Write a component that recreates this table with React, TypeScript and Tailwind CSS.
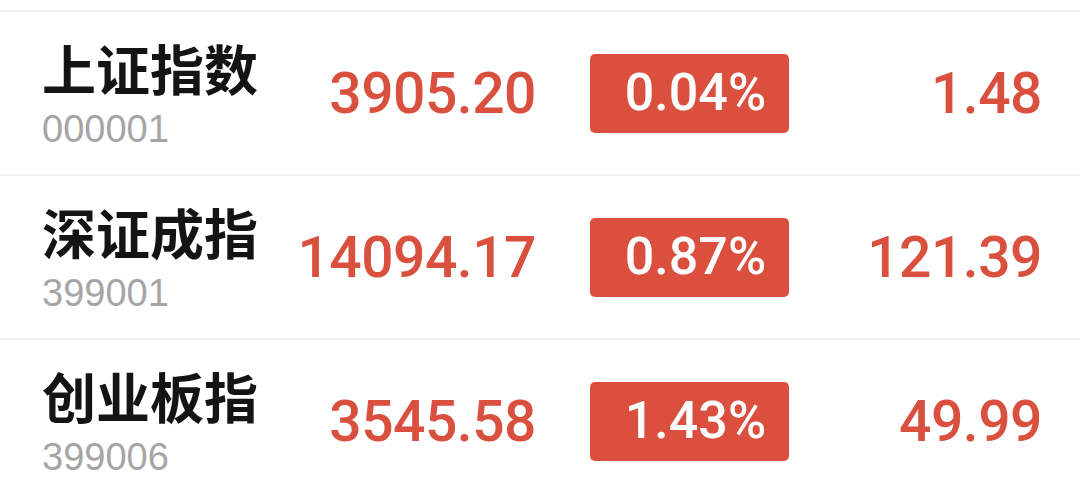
const rows = [
  { name: "上证指数", code: "000001", price: "3905.20", pct: "0.04%", change: "1.48" },
  { name: "深证成指", code: "399001", price: "14094.17", pct: "0.87%", change: "121.39" },
  { name: "创业板指", code: "399006", price: "3545.58", pct: "1.43%", change: "49.99" },
];

export default function App() {
  return (
    <div className="w-[1080px] h-[493px] overflow-hidden bg-white pt-[10px] font-[Roboto,'Liberation_Sans',sans-serif]">
      {rows.map((r) => (
        <div key={r.code} className="flex h-[164px] items-center border-t-2 border-[#f0f0f0]">
          <div className="flex w-[255px] flex-col pl-[42px]">
            <span className="whitespace-nowrap font-['Noto_Sans_CJK_SC',sans-serif] text-[54px] font-bold leading-[58px] text-[#141414]">
              {r.name}
            </span>
            <span className="mt-[13px] font-['Liberation_Sans',sans-serif] text-[38px] leading-[38px] text-[#a5a5a5]">
              {r.code}
            </span>
          </div>
          <div className="w-[281px] text-right text-[57px] font-medium leading-none tracking-[-0.5px] text-[#d9503f]">
            {r.price}
          </div>
          <div className="ml-[54px] flex h-[79px] w-[199px] items-center justify-center rounded-[5px] bg-[#db4f3f] pl-[12px] text-[52px] font-medium leading-none text-white">
            {r.pct}
          </div>
          <div className="flex-1 pr-[38px] text-right text-[57px] font-medium leading-none tracking-[-0.5px] text-[#d9503f]">
            {r.change}
          </div>
        </div>
      ))}
    </div>
  );
}
